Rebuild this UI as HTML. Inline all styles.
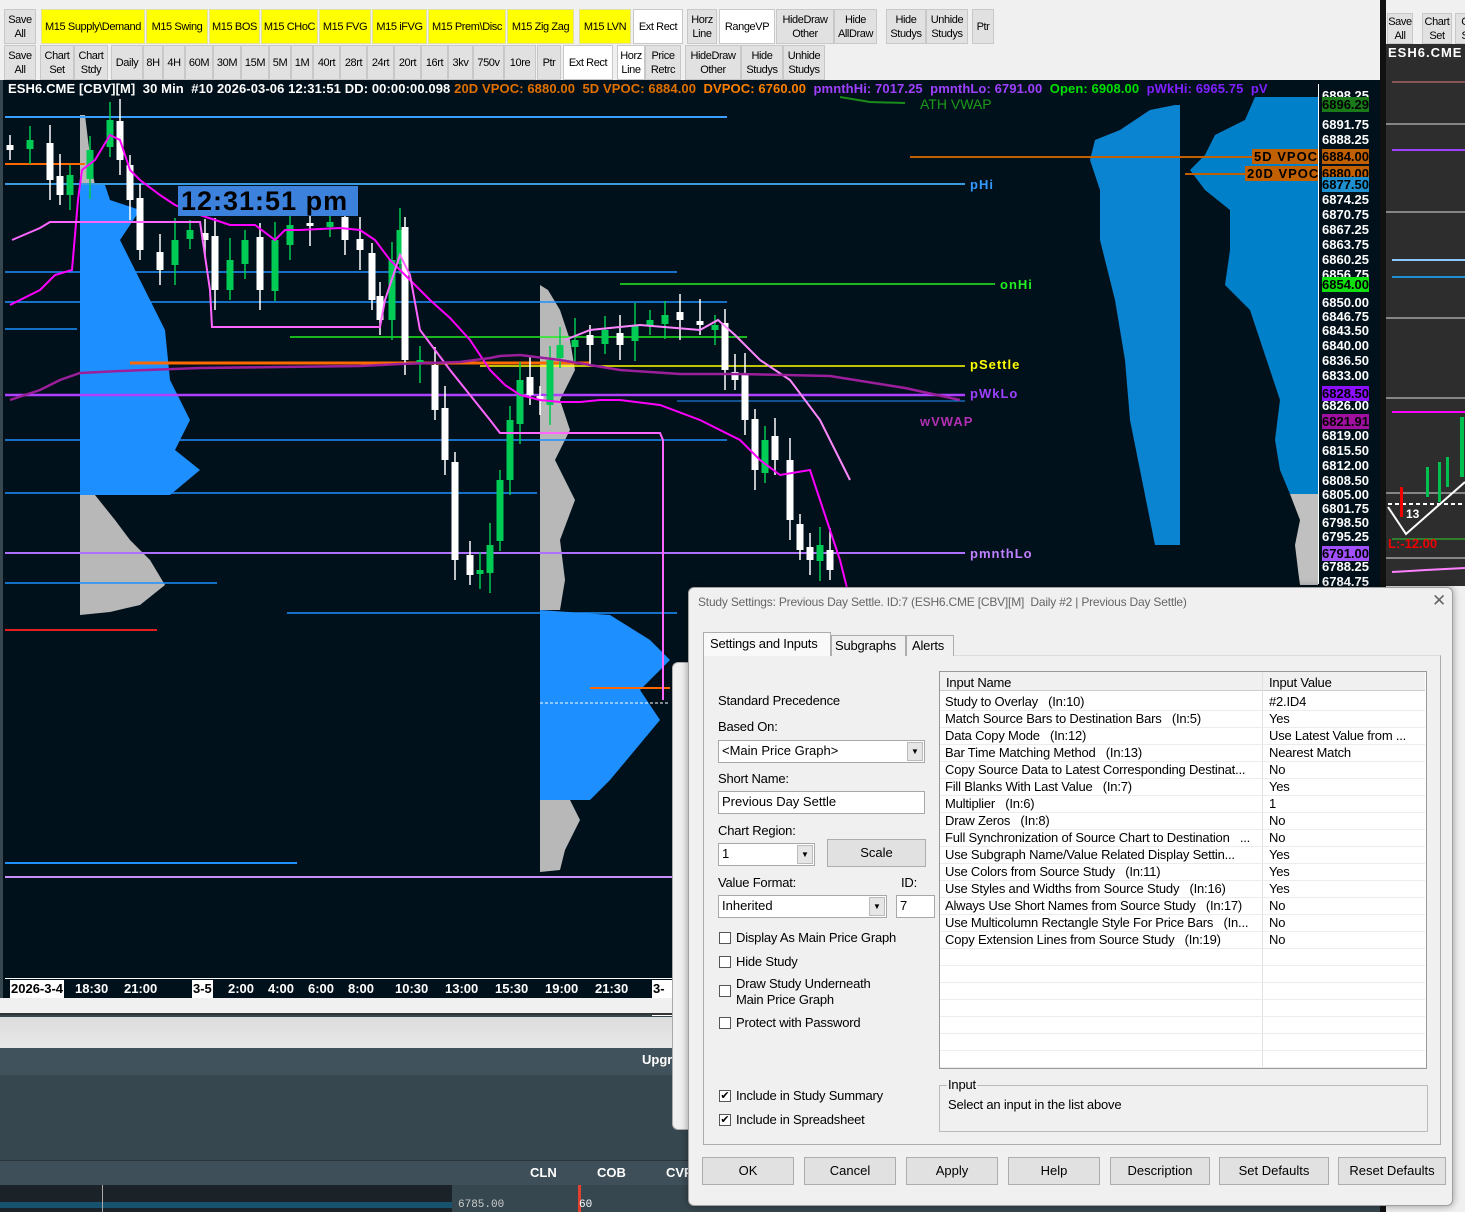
<!DOCTYPE html>
<html><head><meta charset="utf-8">
<style>
*{box-sizing:border-box;margin:0;padding:0}
body{width:1465px;height:1212px;overflow:hidden;background:#37474f;font-family:"Liberation Sans",sans-serif;position:relative}
.abs{position:absolute}
.menu{left:0;top:0;width:1380px;height:8px;background:#f0f0f0}
.tb{left:0;top:8px;width:1380px;height:72px;background:#f0f0f0}
.b{position:absolute;background:#e1e1e1;border:1px solid #c8c8c8;font-family:"Liberation Sans",sans-serif;font-size:11px;letter-spacing:-.4px;line-height:14px;color:#000;display:flex;align-items:center;justify-content:center;text-align:center;height:35px;white-space:nowrap;overflow:hidden}
.y{background:#ffff00;border-color:#e0e0a0}
.w{background:#fff}
.chart{left:3px;top:80px;width:1377px;height:935px;background:#01111c;overflow:hidden}
.hdr{left:8px;top:81px;font:bold 13px "Liberation Sans",sans-serif;color:#fff;white-space:nowrap;letter-spacing:.1px}
.pa{font:bold 13px "Liberation Sans",sans-serif;color:#fff;position:absolute;left:1322px;height:15px;line-height:15px}
.lbl{position:absolute;font:bold 13px "Liberation Sans",sans-serif;letter-spacing:1px}
.dlg{left:688px;top:587px;width:765px;height:619px;background:#f0f0f0;border:1px solid #a0a0a0;border-radius:6px;box-shadow:0 0 8px rgba(0,0,0,.4)}
.dt{font-size:13px;color:#000;position:absolute;white-space:nowrap;letter-spacing:-.2px}
.inp{position:absolute;background:#fff;border:1px solid #a8a8a8;font-size:13px;padding-left:3px;line-height:20px;height:23px}
.dd{position:absolute;right:1px;top:1px;width:16px;height:19px;background:#e6e6e6;border:1px solid #bbb;font-size:8px;text-align:center;line-height:18px}
.cb{position:absolute;width:12px;height:12px;border:1px solid #555;background:#fff;font-size:11px;line-height:10px;text-align:center}
.btn{position:absolute;top:1157px;height:28px;background:#e1e1e1;border:1px solid #adadad;font-size:13px;text-align:center;line-height:26px}
</style></head><body>
<div class="abs menu"></div>
<div class="abs tb">
<div class="b" style="left:4px;top:1px;width:32px">Save<br>All</div>
<div class="b y" style="left:41px;top:1px;width:104px">M15 Supply\Demand</div>
<div class="b y" style="left:146px;top:1px;width:62px">M15 Swing</div>
<div class="b y" style="left:209px;top:1px;width:51px">M15 BOS</div>
<div class="b y" style="left:261px;top:1px;width:57px">M15 CHoC</div>
<div class="b y" style="left:319px;top:1px;width:52px">M15 FVG</div>
<div class="b y" style="left:372px;top:1px;width:55px">M15 iFVG</div>
<div class="b y" style="left:428px;top:1px;width:78px">M15 Prem\Disc</div>
<div class="b y" style="left:507px;top:1px;width:67px">M15 Zig Zag</div>
<div class="b y" style="left:579px;top:1px;width:52px">M15 LVN</div>
<div class="b w" style="left:633px;top:1px;width:50px">Ext Rect</div>
<div class="b" style="left:687px;top:1px;width:30px">Horz<br>Line</div>
<div class="b w" style="left:719px;top:1px;width:56px">RangeVP</div>
<div class="b" style="left:776px;top:1px;width:58px">HideDraw<br>Other</div>
<div class="b" style="left:834px;top:1px;width:43px">Hide<br>AllDraw</div>
<div class="b" style="left:886px;top:1px;width:40px">Hide<br>Studys</div>
<div class="b" style="left:926px;top:1px;width:42px">Unhide<br>Studys</div>
<div class="b" style="left:972px;top:1px;width:22px">Ptr</div>
<div class="b" style="left:4px;top:37px;width:32px">Save<br>All</div>
<div class="b" style="left:40px;top:37px;width:34px">Chart<br>Set</div>
<div class="b" style="left:74px;top:37px;width:34px">Chart<br>Stdy</div>
<div class="b" style="left:111px;top:37px;width:32px">Daily</div>
<div class="b" style="left:143px;top:37px;width:20px">8H</div>
<div class="b" style="left:163px;top:37px;width:22px">4H</div>
<div class="b" style="left:185px;top:37px;width:28px">60M</div>
<div class="b" style="left:213px;top:37px;width:28px">30M</div>
<div class="b" style="left:241px;top:37px;width:28px">15M</div>
<div class="b" style="left:269px;top:37px;width:22px">5M</div>
<div class="b" style="left:291px;top:37px;width:22px">1M</div>
<div class="b" style="left:313px;top:37px;width:27px">40rt</div>
<div class="b" style="left:340px;top:37px;width:27px">28rt</div>
<div class="b" style="left:367px;top:37px;width:27px">24rt</div>
<div class="b" style="left:394px;top:37px;width:27px">20rt</div>
<div class="b" style="left:421px;top:37px;width:27px">16rt</div>
<div class="b" style="left:448px;top:37px;width:25px">3kv</div>
<div class="b" style="left:473px;top:37px;width:31px">750v</div>
<div class="b" style="left:504px;top:37px;width:32px">10re</div>
<div class="b" style="left:537px;top:37px;width:24px">Ptr</div>
<div class="b w" style="left:563px;top:37px;width:50px">Ext Rect</div>
<div class="b w" style="left:617px;top:37px;width:28px">Horz<br>Line</div>
<div class="b" style="left:645px;top:37px;width:36px">Price<br>Retrc</div>
<div class="b" style="left:685px;top:37px;width:56px">HideDraw<br>Other</div>
<div class="b" style="left:741px;top:37px;width:42px">Hide<br>Studys</div>
<div class="b" style="left:783px;top:37px;width:42px">Unhide<br>Studys</div>
</div>

<div class="abs chart">
<svg id="sv" width="1377" height="935" viewBox="3 80 1377 935" style="position:absolute;left:0;top:0">
<polygon fill="#b8b8b8" points="80,115 85,115 88,140 92,170 95,185 80,185"/>
<polygon fill="#1e8fff" points="80,185 105,185 110,200 140,210 120,240 135,270 150,300 165,330 170,380 190,420 175,450 200,470 170,495 80,495"/>
<polygon fill="#b8b8b8" points="80,495 95,495 115,520 130,540 150,560 165,585 140,605 110,612 80,615"/>
<polygon fill="#b8b8b8" points="540,285 548,290 560,310 570,340 575,370 560,400 570,430 555,460 575,500 560,540 565,580 560,610 540,610"/>
<polygon fill="#1e8fff" points="540,610 610,615 650,640 670,660 640,690 660,720 635,750 610,780 590,800 540,800"/>
<polygon fill="#b8b8b8" points="540,800 570,800 580,820 565,850 560,870 540,872"/>
<polygon fill="#0a84d0" points="1180,105 1175,105 1150,110 1120,130 1095,140 1090,160 1100,190 1100,240 1115,300 1125,360 1130,420 1140,470 1150,520 1155,545 1180,545"/>
<polygon fill="#0080c8" points="1318,97 1255,97 1245,120 1215,135 1205,155 1190,170 1205,190 1230,210 1230,250 1225,285 1250,310 1260,340 1270,370 1280,400 1275,440 1280,470 1290,494 1318,494"/>
<polygon fill="#c0c0c0" points="1318,494 1290,494 1300,520 1295,545 1298,570 1300,585 1318,585"/>
<g id="lines"></g>
<g id="cnd"></g>
<polyline fill="none" stroke="#ff00ff" stroke-width="2" points="10,305 40,290 55,275 72,270 78,200 82,170 95,160 110,135 120,140 130,170 140,180 160,195 175,205 200,215 230,225 255,225 275,240 285,230 300,230 340,228 360,230 375,240 390,260 410,280 430,300 450,318 470,340 490,370 505,385 520,395 540,400 560,402 580,402 600,400 620,400 660,405 700,420 740,440 760,460 780,475 810,470 840,560 850,600"/>
<polyline fill="none" stroke="#ff66ff" stroke-width="2" points="12,240 40,228 50,222 180,222 200,222 210,290 212,327 380,327 385,300 395,270 400,255 410,275 420,330 450,370 490,420 500,433 660,433 663,440 663,700"/>
<polyline fill="none" stroke="#ff88ff" stroke-width="2" points="565,340 590,330 640,325 700,330 718,320 735,335 760,360 790,380 820,420 850,480"/>
<polyline fill="none" stroke="#9b1f9b" stroke-width="2.5" points="10,400 40,390 60,380 80,373 120,371 200,368 280,367 360,366 400,364 460,362 490,358 500,356 520,355 560,360 620,370 680,374 740,374 830,376 880,384 905,388 960,400"/>
<polyline fill="none" stroke="#1a8c1a" stroke-width="2" points="840,97 870,102 905,103"/>
</svg>
<div class="abs" style="left:175px;top:106px;width:180px;height:30px;background:#3c82dc;font:bold 27px 'Liberation Sans',sans-serif;color:#000;letter-spacing:1px;line-height:30px;padding-left:3px">12:31:51 pm</div>
</div>
<div class="abs hdr">ESH6.CME [CBV][M]&nbsp; 30 Min&nbsp; #10 2026-03-06 12:31:51 DD: 00:00:00.098 <span style="color:#e07000">20D VPOC: 6880.00&nbsp; 5D VPOC: 6884.00&nbsp; </span><span style="color:#ff8000">DVPOC: 6760.00</span>&nbsp; <span style="color:#a040ff">pmnthHi: 7017.25&nbsp; pmnthLo: 6791.00</span>&nbsp; <span style="color:#00e000">Open: 6908.00</span>&nbsp; <span style="color:#8020ff">pWkHi: 6965.75&nbsp; pV</span></div>
<div class="lbl" style="left:920px;top:96px;color:#1a9a1a;font-weight:normal;font-size:14px;letter-spacing:0">ATH VWAP</div>
<div class="lbl" style="left:970px;top:177px;color:#3399ff">pHi</div>
<div class="lbl" style="left:1000px;top:277px;color:#22ee22">onHi</div>
<div class="lbl" style="left:970px;top:357px;color:#ffff00">pSettle</div>
<div class="lbl" style="left:970px;top:386px;color:#a040ff">pWkLo</div>
<div class="lbl" style="left:920px;top:414px;color:#b030b0">wVWAP</div>
<div class="lbl" style="left:970px;top:546px;color:#c080ff">pmnthLo</div>
<div class="lbl" style="left:1252px;top:149px;background:#c06000;color:#000;font-size:13px;padding:0 2px;width:66px;overflow:hidden;white-space:nowrap">5D VPOC</div>
<div class="lbl" style="left:1245px;top:166px;background:#c06000;color:#000;font-size:13px;padding:0 2px;width:73px;overflow:hidden;white-space:nowrap">20D VPOC</div>
<div class="abs" style="left:1318px;top:84px;width:1px;height:500px;background:#fff"></div>
<div id="pax"></div>
<div class="abs" style="left:5px;top:978px;width:667px;height:1px;background:#fff"></div>
<div class="abs" style="left:5px;top:980px;width:667px;height:18px;font:bold 13px 'Liberation Sans',sans-serif;color:#fff;line-height:18px">
<span class="abs" style="left:5px;background:#fff;color:#000;padding:0 1px">2026-3-4</span>
<span class="abs" style="left:70px">18:30</span><span class="abs" style="left:119px">21:00</span>
<span class="abs" style="left:187px;background:#fff;color:#000;padding:0 1px">3-5</span>
<span class="abs" style="left:223px">2:00</span><span class="abs" style="left:263px">4:00</span><span class="abs" style="left:303px">6:00</span><span class="abs" style="left:343px">8:00</span><span class="abs" style="left:390px">10:30</span><span class="abs" style="left:440px">13:00</span><span class="abs" style="left:490px">15:30</span><span class="abs" style="left:540px">19:00</span><span class="abs" style="left:590px">21:30</span>
<span class="abs" style="left:647px;background:#fff;color:#000;padding:0 1px">3-6</span>
</div>
<div class="abs" style="left:0;top:998px;width:680px;height:17px;background:#f0f0f0;border-bottom:2px solid #333"></div>
<div class="abs" style="left:0;top:1017px;width:680px;height:31px;background:linear-gradient(#dcdcdc,#e8e8e8)"></div>
<div class="abs" style="left:0;top:1048px;width:680px;height:27px;background:#40525c"></div>
<div class="abs" style="left:642px;top:1052px;color:#fff;font:bold 13px 'Liberation Sans',sans-serif">Upgr</div>
<div class="abs" style="left:0;top:1160px;width:700px;height:25px;background:#3e4f59;border-top:1px solid #2a363c"></div>
<div class="abs" style="left:530px;top:1165px;color:#fff;font:bold 13px 'Liberation Sans',sans-serif">CLN</div>
<div class="abs" style="left:597px;top:1165px;color:#fff;font:bold 13px 'Liberation Sans',sans-serif">COB</div>
<div class="abs" style="left:666px;top:1165px;color:#fff;font:bold 13px 'Liberation Sans',sans-serif">CVP</div>
<div class="abs" style="left:0;top:1185px;width:452px;height:27px;background:#1b2328"></div>
<div class="abs" style="left:0;top:1202px;width:452px;height:6px;background:#17536e"></div>
<div class="abs" style="left:102px;top:1185px;width:1px;height:27px;background:#aaa"></div>
<div class="abs" style="left:458px;top:1199px;color:#ccc;font:11px 'Liberation Mono',monospace">6785.00</div>
<div class="abs" style="left:578px;top:1185px;width:3px;height:27px;background:#e04030"></div>
<div class="abs" style="left:579px;top:1199px;color:#fff;font:11px 'Liberation Mono',monospace">60</div>
<div class="abs" style="left:672px;top:662px;width:30px;height:468px;background:#f0f0f0;border:1px solid #aaa;border-radius:6px"></div>
<div class="abs" style="left:1380px;top:0;width:6px;height:1212px;background:#111"></div>
<div class="abs" style="left:1386px;top:0;width:79px;height:44px;background:#f0f0f0"></div>
<div class="b" style="left:1387px;top:13px;width:26px;height:31px">Save<br>All</div>
<div class="b" style="left:1422px;top:13px;width:30px;height:31px">Chart<br>Set</div>
<div class="b" style="left:1455px;top:13px;width:20px;height:31px">C<br>S</div>
<div class="abs" style="left:1386px;top:44px;width:79px;height:542px;background:#2d2d2d"></div>
<div class="abs" style="left:1388px;top:45px;color:#fff;font:bold 13px 'Liberation Sans',sans-serif;letter-spacing:1px">ESH6.CME</div>
<svg class="abs" style="left:1386px;top:62px" width="79" height="524">
<line x1="0" y1="62" x2="79" y2="62" stroke="#ddd"/><line x1="0" y1="150" x2="79" y2="150" stroke="#ddd"/><line x1="0" y1="256" x2="79" y2="256" stroke="#ddd"/><line x1="0" y1="336" x2="79" y2="336" stroke="#ddd"/><line x1="0" y1="431" x2="79" y2="431" stroke="#ddd"/><line x1="0" y1="496" x2="79" y2="496" stroke="#ddd"/>
<line x1="6" y1="20" x2="79" y2="20" stroke="#e08080"/><line x1="6" y1="88" x2="79" y2="88" stroke="#a040ff" stroke-width="2"/><line x1="6" y1="198" x2="79" y2="198" stroke="#8ac8ff" stroke-width="2"/><line x1="6" y1="215" x2="79" y2="215" stroke="#1e90d0" stroke-width="2"/><line x1="6" y1="350" x2="79" y2="350" stroke="#ff00ff" stroke-width="2"/>
<line x1="6" y1="477" x2="79" y2="477" stroke="#30d030"/>
<polyline fill="none" stroke="#fff" stroke-width="2" points="2,445 20,472 79,420"/><line x1="2" y1="442" x2="79" y2="442" stroke="#fff" stroke-dasharray="4 3" stroke-width="2"/>
<rect x="14" y="425" width="3" height="30" fill="#e00"/><rect x="40" y="405" width="3" height="30" fill="#00c050"/><rect x="52" y="400" width="3" height="40" fill="#00c050"/><rect x="60" y="395" width="3" height="30" fill="#00c050"/><rect x="74" y="355" width="4" height="60" fill="#00c050"/>
<text x="20" y="456" fill="#fff" font-size="12" font-weight="bold" font-family="Liberation Sans">13</text>
<text x="2" y="486" fill="#e00" font-size="13" font-weight="bold" font-family="Liberation Sans">L:-12.00</text>
<polyline fill="none" stroke="#ff80ff" stroke-width="2" points="6,510 40,508 79,506"/>
</svg>
<div class="abs" style="left:1386px;top:586px;width:79px;height:626px;background:#f0f0f0"></div>

<div class="abs dlg">
<div class="dt" style="left:9px;top:7px;color:#666;font-size:12px">Study Settings: Previous Day Settle. ID:7 (ESH6.CME [CBV][M]&nbsp; Daily #2 | Previous Day Settle)</div>
<div class="dt" style="left:743px;top:3px;color:#666;font-size:17px">✕</div>
<div class="abs" style="left:14px;top:67px;width:738px;height:490px;border:1px solid #adadad;border-top-color:#dcdcdc;background:#f0f0f0"></div>
<div class="abs" style="left:14px;top:44px;width:128px;height:24px;border:1px solid #adadad;border-bottom:none;background:#f9f9f9"></div>
<div class="abs" style="left:142px;top:47px;width:75px;height:21px;border:1px solid #adadad;border-bottom:none;background:#f0f0f0"></div>
<div class="abs" style="left:217px;top:47px;width:48px;height:21px;border:1px solid #adadad;border-bottom:none;background:#f0f0f0"></div>
<div class="dt" style="left:21px;top:48px">Settings and Inputs</div>
<div class="dt" style="left:146px;top:50px">Subgraphs</div>
<div class="dt" style="left:223px;top:50px">Alerts</div>
<div class="dt" style="left:29px;top:105px">Standard Precedence</div>
<div class="dt" style="left:29px;top:131px">Based On:</div>
<div class="inp" style="left:29px;top:152px;width:207px">&lt;Main Price Graph&gt;<div class="dd">▼</div></div>
<div class="dt" style="left:29px;top:183px">Short Name:</div>
<div class="inp" style="left:29px;top:203px;width:207px">Previous Day Settle</div>
<div class="dt" style="left:29px;top:235px">Chart Region:</div>
<div class="inp" style="left:29px;top:255px;width:97px">1<div class="dd">▼</div></div>
<div class="abs" style="left:138px;top:251px;width:99px;height:28px;background:#e1e1e1;border:1px solid #adadad;font-size:13px;text-align:center;line-height:26px">Scale</div>
<div class="dt" style="left:29px;top:287px">Value Format:</div>
<div class="dt" style="left:212px;top:287px">ID:</div>
<div class="inp" style="left:29px;top:307px;width:169px">Inherited<div class="dd">▼</div></div>
<div class="inp" style="left:207px;top:307px;width:39px">7</div>
<div class="cb" style="left:30px;top:344px"></div><div class="dt" style="left:47px;top:342px">Display As Main Price Graph</div>
<div class="cb" style="left:30px;top:368px"></div><div class="dt" style="left:47px;top:366px">Hide Study</div>
<div class="cb" style="left:30px;top:397px"></div><div class="dt" style="left:47px;top:388px;line-height:16px">Draw Study Underneath<br>Main Price Graph</div>
<div class="cb" style="left:30px;top:429px"></div><div class="dt" style="left:47px;top:427px">Protect with Password</div>
<div class="cb" style="left:30px;top:502px">✔</div><div class="dt" style="left:47px;top:500px">Include in Study Summary</div>
<div class="cb" style="left:30px;top:526px">✔</div><div class="dt" style="left:47px;top:524px">Include in Spreadsheet</div>
<div class="abs" style="left:250px;top:83px;width:488px;height:398px;background:#fff;border:1px solid #999"></div>
<div class="abs" style="left:251px;top:84px;width:485px;height:19px;background:#f0f0f0;border-bottom:1px solid #ccc"></div>
<div class="abs" style="left:573px;top:84px;width:1px;height:396px;background:#e0e0e0"></div>
<div class="dt" style="left:257px;top:87px">Input Name</div>
<div class="dt" style="left:580px;top:87px">Input Value</div>
<div id="rows"></div>
<div class="abs" style="left:250px;top:497px;width:489px;height:47px;border:1px solid #bbb"></div>
<div class="dt" style="left:258px;top:489px;background:#f0f0f0;padding:0 1px">Input</div>
<div class="dt" style="left:259px;top:509px">Select an input in the list above</div>
</div>
<div class="btn" style="left:702px;width:92px">OK</div>
<div class="btn" style="left:804px;width:92px">Cancel</div>
<div class="btn" style="left:906px;width:92px">Apply</div>
<div class="btn" style="left:1008px;width:92px">Help</div>
<div class="btn" style="left:1110px;width:100px">Description</div>
<div class="btn" style="left:1219px;width:110px">Set Defaults</div>
<div class="btn" style="left:1338px;width:108px">Reset Defaults</div>

<script>
var NS="http://www.w3.org/2000/svg";
function el(p,t,a){var e=document.createElementNS(NS,t);for(var k in a)e.setAttribute(k,a[k]);p.appendChild(e);return e;}
var L=document.getElementById('lines');
[[117,5,727,'#3aa0ff',2],[184,5,965,'#3a9ae0',2],[272,5,677,'#1e90ff',1.5],[302,5,727,'#1e90ff',1.5],[329,5,77,'#1e90ff',1.5],[440,5,727,'#1e90ff',1.5],[493,5,537,'#1e90ff',1.5],[583,5,217,'#1e90ff',1.5],[613,287,677,'#1e90ff',1.5],[863,5,297,'#1e90ff',2],[401,677,965,'#1e90ff',1],
[284,620,995,'#22ee22',1.5],[337,290,747,'#22ee22',1.5],[366,480,965,'#ffff00',1.5],[363,130,590,'#ff6a00',3],[395,5,965,'#b040ff',2.5],[553,5,965,'#b070ff',2],[877,5,680,'#c890ff',2],[630,5,157,'#e02020',2],[157,910,1318,'#c06000',2],[174,1185,1318,'#c06000',2],[164,5,85,'#ff6a00',2]].forEach(function(l){el(L,'line',{x1:l[1],y1:l[0],x2:l[2],y2:l[0],stroke:l[3],'stroke-width':l[4]});});
el(L,'line',{x1:540,y1:703,x2:670,y2:703,stroke:'#fff','stroke-dasharray':'3 2'});
el(L,'line',{x1:590,y1:688,x2:670,y2:688,stroke:'#ff6a00','stroke-width':2});
var C=document.getElementById('cnd');
var path=[[10,150],[30,140],[50,180],[60,195],[70,175],[90,150],[110,120],[120,160],[130,200],[140,250],[160,270],[175,240],[190,230],[205,240],[215,290],[230,260],[245,240],[260,290],[275,240],[290,225],[310,225],[330,222],[345,240],[360,250],[372,300],[380,320],[392,260],[400,230],[405,360],[420,360],[435,410],[445,460],[455,560],[470,575],[480,570],[490,545],[500,480],[510,420],[520,380],[530,395],[540,400],[550,360],[560,345],[575,340],[590,345],[605,330],[620,345],[635,325],[650,320],[665,315],[680,320],[700,325],[715,325],[725,370],[735,380],[745,420],[755,470],[765,440],[775,460],[790,520],[800,550],[810,560],[820,545],[830,570]];
var prev=path[0][1];
path.forEach(function(p,i){var x=p[0],c=p[1],o=prev+((i*37)%11-5);var up=c<o;var top=Math.min(o,c),h=Math.max(Math.abs(o-c),3);
 el(C,'line',{x1:x,y1:top-10-(i%4)*4,x2:x,y2:top+h+10+(i%3)*5,stroke:up?'#00c850':'#fff','stroke-width':1.5});
 el(C,'rect',{x:x-3.5,y:top,width:7,height:h,fill:up?'#00cc55':'#fff'});prev=c;});
var pax=document.getElementById('pax'),h='';
var P=[['6898.25',88],['6896.29',97,'#1a7a1a'],['6891.75',117],['6888.25',132],['6884.00',149,'#c06000'],['6880.00',166,'#c06000'],['6877.50',177,'#1e90d0'],['6874.25',192],['6870.75',207],['6867.25',222],['6863.75',237],['6860.25',252],['6856.75',267],['6854.00',277,'#10e010'],['6850.00',295],['6846.75',309],['6843.50',323],['6840.00',338],['6836.50',353],['6833.00',368],['6828.50',386,'#8a10ff'],['6826.00',398],['6821.91',414,'#a010a0'],['6819.00',428],['6815.50',443],['6812.00',458],['6808.50',473],['6805.00',487],['6801.75',501],['6798.50',515],['6795.25',529],['6791.00',546,'#a050ff'],['6788.25',559],['6784.75',574]];
P.forEach(function(p){h+='<div class="pa" style="top:'+p[1]+'px;'+(p[2]?'background:'+p[2]+';color:#000;':'')+'">'+p[0]+'</div>';});
pax.innerHTML=h;
var R=[['Study to Overlay&nbsp;&nbsp; (In:10)','#2.ID4'],['Match Source Bars to Destination Bars&nbsp;&nbsp; (In:5)','Yes'],['Data Copy Mode&nbsp;&nbsp; (In:12)','Use Latest Value from ...'],['Bar Time Matching Method&nbsp;&nbsp; (In:13)','Nearest Match'],['Copy Source Data to Latest Corresponding Destinat...','No'],['Fill Blanks With Last Value&nbsp;&nbsp; (In:7)','Yes'],['Multiplier&nbsp;&nbsp; (In:6)','1'],['Draw Zeros&nbsp;&nbsp; (In:8)','No'],['Full Synchronization of Source Chart to Destination&nbsp;&nbsp; ...','No'],['Use Subgraph Name/Value Related Display Settin...','Yes'],['Use Colors from Source Study&nbsp;&nbsp; (In:11)','Yes'],['Use Styles and Widths from Source Study&nbsp;&nbsp; (In:16)','Yes'],['Always Use Short Names from Source Study&nbsp;&nbsp; (In:17)','No'],['Use Multicolumn Rectangle Style For Price Bars&nbsp;&nbsp; (In...','No'],['Copy Extension Lines from Source Study&nbsp;&nbsp; (In:19)','No'],['',''],['',''],['',''],['',''],['',''],['',''],['','']];
h='';R.forEach(function(r,i){var t=106+i*17;h+='<div class="dt" style="left:256px;top:'+t+'px;width:316px;overflow:hidden">'+r[0]+'</div><div class="dt" style="left:580px;top:'+t+'px">'+r[1]+'</div><div class="abs" style="left:251px;top:'+(t+16)+'px;width:485px;height:1px;background:#ececec"></div>';});
document.getElementById('rows').innerHTML=h;
</script>
</body></html>
